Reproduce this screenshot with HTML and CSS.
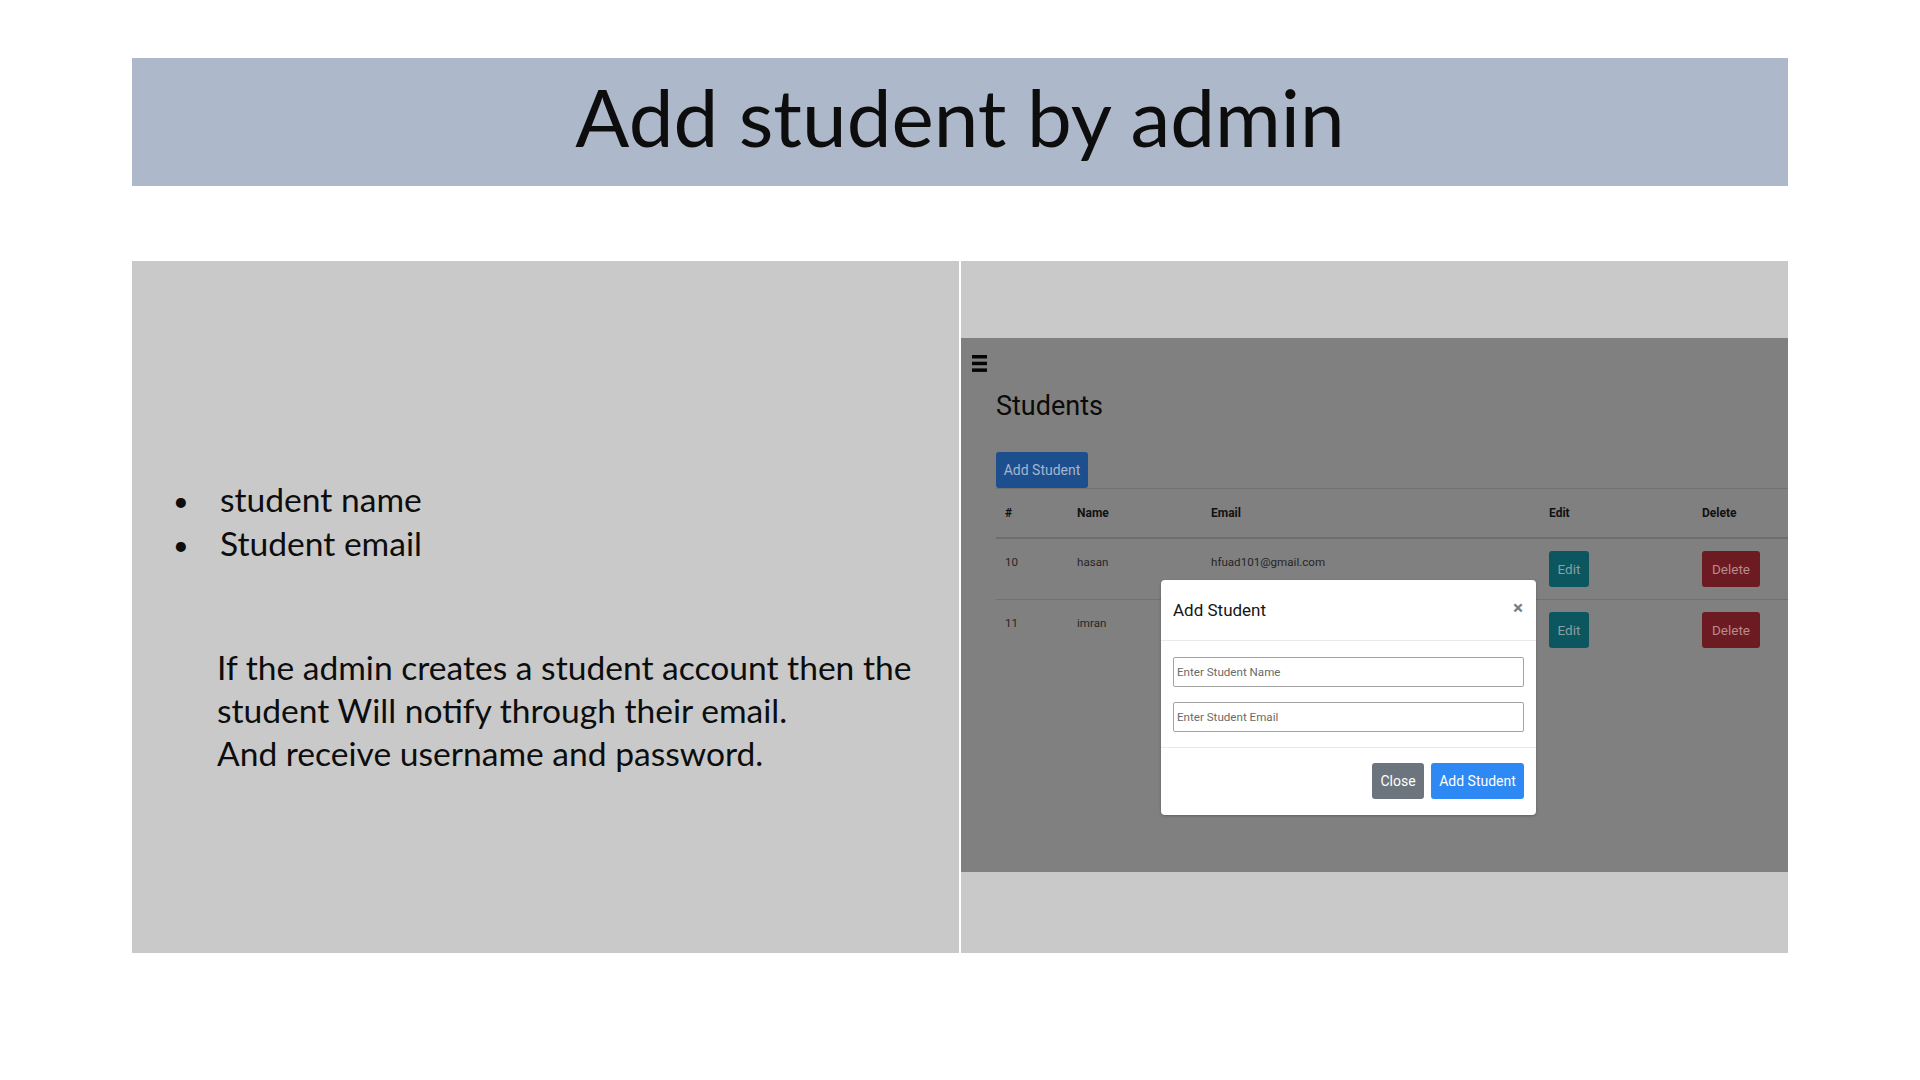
FILE: index.html
```html
<!DOCTYPE html>
<html lang="en">
<head>
<meta charset="utf-8">
<title>Add student by admin</title>
<link rel="stylesheet" href="styles.css">
</head>
<body>
<div class="slide">
  <header class="banner"><h1>Add student by admin</h1></header>
  <div class="panels">
    <section class="panel left">
      <ul class="bullets">
        <li>student name</li>
        <li>Student email</li>
      </ul>
      <p class="desc">If the admin creates a student account then the<br>student Will notify through their email.<br>And receive username and password.</p>
    </section>
    <section class="panel right">
      <div class="shot">
        <svg class="burger" viewBox="0 0 15 17" width="15" height="17">
          <rect x="0" y="0" width="15" height="3.5"/>
          <rect x="0" y="6.7" width="15" height="3.5"/>
          <rect x="0" y="13.4" width="15" height="3.5"/>
        </svg>
        <div class="content">
          <h2 class="page-title">Students</h2>
          <button class="btn btn-add">Add Student</button>
          <div class="table">
            <div class="tr thead">
              <div class="td">#</div><div class="td">Name</div><div class="td">Email</div><div class="td">Edit</div><div class="td">Delete</div>
            </div>
            <div class="tr trow">
              <div class="td">10</div><div class="td">hasan</div><div class="td">hfuad101@gmail.com</div>
              <div class="td"><span class="btn btn-edit">Edit</span></div>
              <div class="td"><span class="btn btn-del">Delete</span></div>
            </div>
            <div class="tr trow second">
              <div class="td">11</div><div class="td">imran</div><div class="td"></div>
              <div class="td"><span class="btn btn-edit">Edit</span></div>
              <div class="td"><span class="btn btn-del">Delete</span></div>
            </div>
          </div>
        </div>
        <div class="modal">
          <div class="modal-header">
            <span class="modal-title">Add Student</span>
            <span class="modal-close">&times;</span>
          </div>
          <div class="modal-body">
            <div class="field">Enter Student Name</div>
            <div class="field">Enter Student Email</div>
          </div>
          <div class="modal-footer">
            <span class="btn btn-close">Close</span>
            <span class="btn btn-submit">Add Student</span>
          </div>
        </div>
      </div>
    </section>
  </div>
</div>
</body>
</html>
```

FILE: styles.css
```css
* { box-sizing: border-box; }
html, body { margin: 0; padding: 0; background: #ffffff; }
.slide {
  width: 1920px;
  height: 1080px;
  background: #ffffff;
  padding-top: 58px;
}
.banner {
  margin: 0 132px;
  height: 128px;
  background: #adb9ca;
  display: flex;
  align-items: center;
  justify-content: center;
  padding-bottom: 12px;
}
.banner h1 {
  margin: 0;
  font-family: Lato, "Open Sans", sans-serif;
  font-weight: 400;
  font-size: 80px;
  line-height: 96px;
  color: #0d0d0d;
}
.panels {
  margin: 75px 0 0 132px;
  display: grid;
  grid-template-columns: 827px 827px;
  column-gap: 2px;
  height: 692px;
}
.panel { background: #c9c9c9; }
.left {
  padding-top: 217px;
  font-family: Lato, "Open Sans", sans-serif;
  font-size: 33.6px;
  color: #0d0d0d;
}
.bullets {
  list-style: none;
  margin: 0;
  padding: 0 0 0 41px;
  line-height: 43px;
}
.bullets li { white-space: nowrap; }
.bullets li::before {
  content: "\2022";
  display: inline-block;
  width: 47px;
  font-size: 27px;
  vertical-align: 1px;
}
.desc {
  margin: 80px 0 0 85px;
  line-height: 43px;
  white-space: nowrap;
}
.right { padding-top: 77px; }
.shot {
  position: relative;
  height: 534px;
  padding-top: 17px;
  background: #808080;
  font-family: Roboto, "Noto Sans", sans-serif;
}
.burger { display: block; margin: 0 0 0 11px; fill: #050505; }
.content { padding-left: 35px; }
.page-title {
  margin: 17px 0 0;
  font-weight: 400;
  font-size: 27px;
  line-height: 34px;
  color: #0b0b0b;
}
.btn {
  display: inline-flex;
  align-items: center;
  justify-content: center;
  height: 36px;
  border: none;
  border-radius: 3px;
  font-family: Roboto, "Noto Sans", sans-serif;
  font-size: 14px;
  padding: 0;
}
.btn-add {
  margin-top: 29px;
  width: 92px;
  background: #1d4f8e;
  color: #a4b5cc;
  display: flex;
}
.table { border-top: 1px solid #727272; }
.tr {
  display: grid;
  grid-template-columns: 72px 134px 338px 153px 1fr;
}
.td { padding-left: 9px; white-space: nowrap; }
.thead {
  height: 50px;
  align-items: center;
  border-bottom: 2px solid #6e6e6e;
  font-size: 12px;
  font-weight: 700;
  color: #111111;
}
.trow {
  height: 60px;
  align-items: start;
  padding-top: 12px;
  font-size: 11.6px;
  line-height: 22px;
  color: #262626;
}
.trow.second { border-top: 1px solid #707070; height: 61px; }
.btn-edit { width: 40px; background: #0c5660; color: #86a0a4; font-size: 13.5px; }
.btn-del { width: 58px; background: #6d1b22; color: #b98a8e; font-size: 13.5px; }
.modal {
  position: absolute;
  left: 200px;
  top: 242px;
  width: 375px;
  height: 235px;
  background: #ffffff;
  border-radius: 4px;
  box-shadow: 0 1px 3px rgba(0,0,0,0.25);
}
.modal-header {
  height: 61px;
  border-bottom: 1px solid #e7e9ec;
  display: flex;
  align-items: center;
  justify-content: space-between;
  padding: 0 13px 0 12px;
}
.modal-title { font-size: 17px; color: #151515; }
.modal-close {
  font-size: 19px;
  font-weight: 700;
  color: #7d7d7d;
  margin-top: -6px;
}
.modal-body {
  padding: 16px 12px 15px;
  display: flex;
  flex-direction: column;
  gap: 15px;
  border-bottom: 1px solid #e7e9ec;
}
.field {
  height: 30px;
  border: 1px solid #a3a3a3;
  border-radius: 2px;
  padding-left: 3px;
  display: flex;
  align-items: center;
  font-size: 11.6px;
  color: #6a6a6a;
}
.modal-footer {
  display: flex;
  justify-content: flex-end;
  gap: 7px;
  padding: 15px 12px 0;
}
.btn-close { width: 52px; background: #6c757d; color: #ffffff; }
.btn-submit { width: 93px; background: #2f89f5; color: #ffffff; }
```
